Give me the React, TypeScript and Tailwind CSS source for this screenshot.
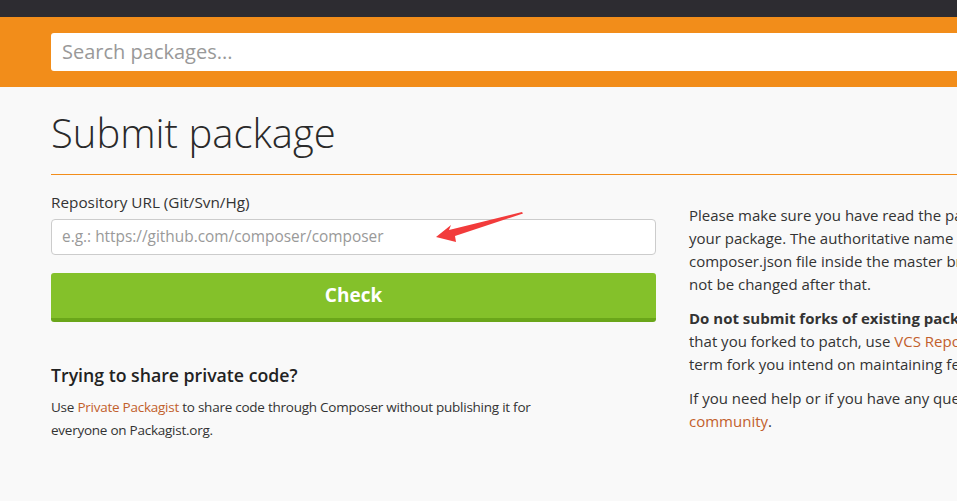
import React from "react";

const LINK = "text-[#c2602c]";

export default function App() {
  return (
    <div className="relative min-h-screen overflow-hidden bg-[#f9f9f9] font-['Open_Sans',sans-serif] text-[#333]">
      <div className="h-[17px] bg-[#2d2c31]" />
      <div className="h-[70px] bg-[#f28d1a] pl-[51px] pt-[16px]">
        <div className="h-[38px] w-[1100px] rounded-[3px] bg-white pl-[11px] flex items-center">
          <span className="text-[20px] text-[#999]">Search packages...</span>
        </div>
      </div>

      <div className="w-[1200px] pl-[51px]">
        <h1 className="mt-[22px] border-b border-[#f28d1a] pb-[17px] text-[40px] font-light leading-[48px] text-[#2a2a2a]">
          Submit package
        </h1>

        <div className="flex">
          <div className="w-[605px] shrink-0">
            <label className="mt-[17px] block text-[15.3px] leading-[20px] text-[#333]">
              Repository URL (Git/Svn/Hg)
            </label>
            <div className="mt-[7px] flex h-[36px] items-center rounded-[4px] border border-[#ccc] bg-white pl-[10px]">
              <span className="text-[15.4px] text-[#999]">e.g.: https://github.com/composer/composer</span>
            </div>
            <button className="mt-[18px] flex h-[49px] w-full items-center justify-center rounded-[3px] border-b-[4px] border-[#6aa61a] bg-[#84c12a] text-[19px] font-bold text-white">
              Check
            </button>

            <h3 className="mt-[40px] text-[17.7px] font-semibold leading-[26px] text-[#222]">
              Trying to share private code?
            </h3>
            <p className="mt-[8px] text-[13.5px] leading-[23px] tracking-[-0.25px] text-[#333]">
              Use <span className={LINK}>Private Packagist</span> to share code through Composer without publishing it for
              <br />
              everyone on Packagist.org.
            </p>
          </div>

          <div className="ml-[33px] w-[620px] shrink-0 whitespace-nowrap pt-[29px] text-[15px] leading-[23px] text-[#333]">
            <p className="mb-[11px]">
              Please make sure you have read the <span>package naming conventions</span> before submitting
              <br />
              your package. The authoritative name of your package will be taken from the
              <br />
              composer.json file inside the master branch or trunk of your repository, and it can
              <br />
              not be changed after that.
            </p>
            <p className="mb-[11px]">
              <b className="font-bold">Do not submit forks of existing packages.</b> If you need to test changes to a package
              <br />
              that you forked to patch, use <span className={LINK}>VCS Repositories</span> instead. If however it is a real long-
              <br />
              term fork you intend on maintaining feel free to submit it.
            </p>
            <p>
              If you need help or if you have any questions please get in touch with the Composer
              <br />
              <span className={LINK}>community</span>.
            </p>
          </div>
        </div>
      </div>

      <svg className="pointer-events-none absolute left-0 top-0" width="957" height="501">
        <polygon
          points="436,237 451,225 449,230 522,212 523,213.5 455,236 456,242"
          fill="#f23b3b"
        />
      </svg>
    </div>
  );
}
